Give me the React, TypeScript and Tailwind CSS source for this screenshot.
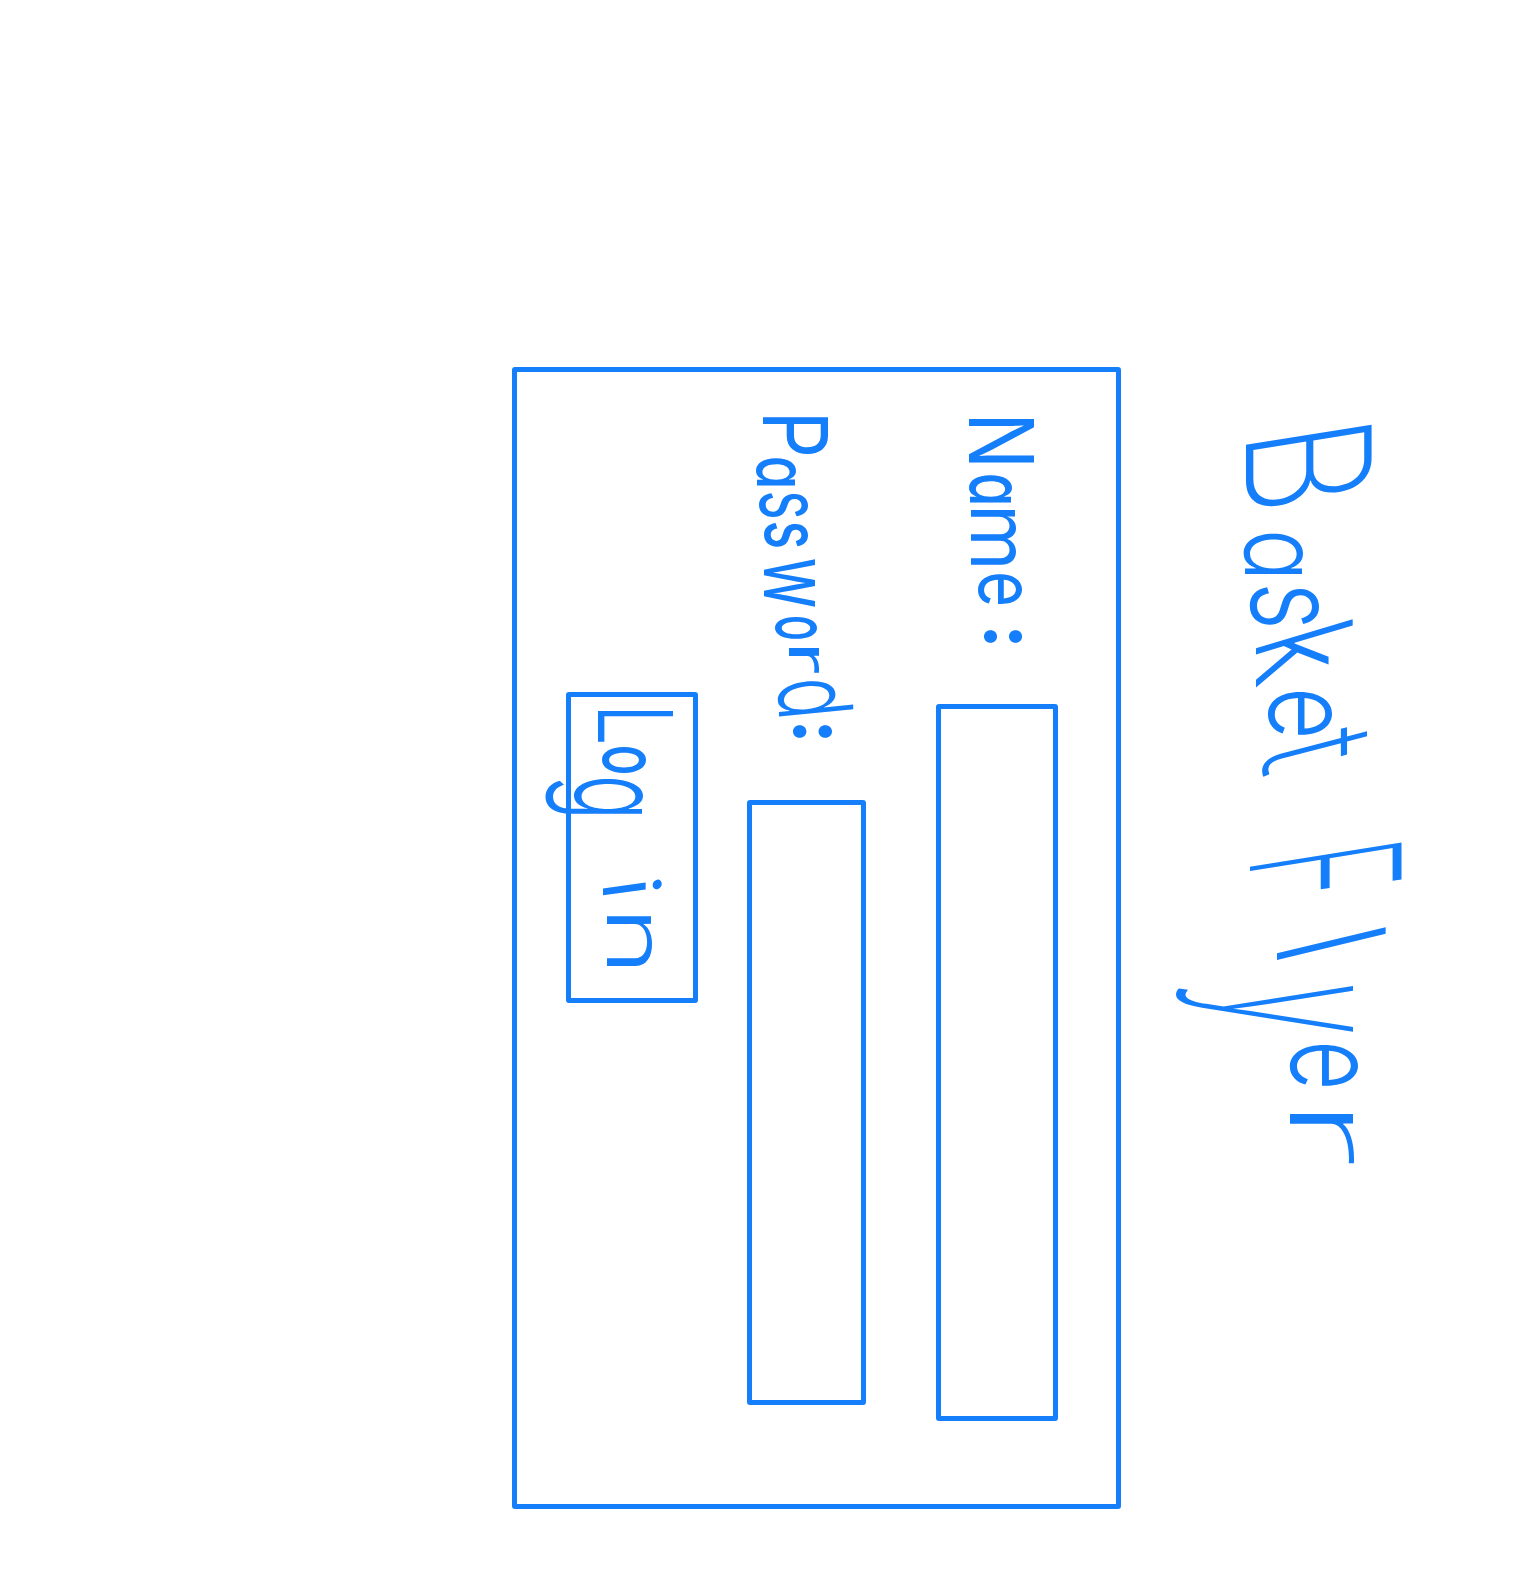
import { useMemo } from "react";

// char, ink left, ink right, ink top, ink bottom, back-slant (dx per dy)
type Glyph = [string, number, number, number, number, number?];

const TITLE_FIRST: Glyph[] = [
  ["B", 424, 511, 165, 291, 0.16],
  ["a", 533, 570, 233, 293],
  ["s", 587, 625, 218, 287],
  ["k", 619, 688, 184, 281, 0.3],
  ["e", 692, 735, 204, 268],
  ["t", 722, 778, 170, 277, 0.26],
];
const TITLE_SECOND: Glyph[] = [
  ["F", 842, 904, 134, 286, 0.16],
  ["l", 927, 960, 150, 259, 0.24],
  ["y", 986, 1032, 184, 361],
  ["e", 1045, 1086, 178, 246],
  ["r", 1114, 1164, 183, 247],
];
const NAME: Glyph[] = [
  ["N", 419, 463, 502, 567],
  ["a", 475, 500, 524, 567],
  ["m", 510, 565, 520, 565],
  ["e", 574, 604, 515, 559],
  [":", 630, 643, 515, 553],
];
const PASSWORD: Glyph[] = [
  ["P", 417, 454, 708, 773],
  ["a", 458, 483, 741, 781],
  ["s", 493, 517, 729, 778],
  ["s", 523, 547, 729, 773],
  ["w", 559, 607, 722, 773],
  ["o", 617, 639, 719, 761],
  ["r", 648, 673, 718, 748],
  ["d", 677, 717, 683, 759, 0.1],
  [":", 725, 738, 704, 743],
];
const LOG: Glyph[] = [
  ["L", 711, 742, 864, 939],
  ["o", 747, 773, 891, 935],
  ["g", 779, 814, 893, 991],
];
const IN: Glyph[] = [
  ["i", 879, 897, 875, 934, 0.14],
  ["n", 916, 966, 884, 929],
];

const PEN = 6.8;
const WEIGHTS = [100, 200, 300, 400, 500, 600, 700, 800];

// Fits one glyph's ink to its box in the given weight and reports its stroke width.
function fit(ctx: CanvasRenderingContext2D, glyph: Glyph, weight: number) {
  const [char, left, right, top, bottom, slant = 0] = glyph;
  const height = bottom - top;
  ctx.font = `${weight} 200px Inter, sans-serif`;
  const stem = ctx.measureText("l");
  const m = ctx.measureText(char);
  const k = height / (m.actualBoundingBoxAscent + m.actualBoundingBoxDescent);
  const size = k * 200;
  const baseline = size / 2 + ((m.fontBoundingBoxAscent - m.fontBoundingBoxDescent) * k) / 2;
  const inkTop = baseline - m.actualBoundingBoxAscent * k;
  const inkLeft = -m.actualBoundingBoxLeft * k;
  const inkWidth = (m.actualBoundingBoxLeft + m.actualBoundingBoxRight) * k;
  const scale = (right - left - slant * height) / inkWidth;
  const stroke = (stem.actualBoundingBoxLeft + stem.actualBoundingBoxRight) * k;
  return {
    miss: char === ":" ? 800 - weight : Math.abs(stroke * (0.5 * scale + 0.5) - PEN),
    style: {
      fontWeight: weight,
      fontSize: size,
      transform: `matrix(${scale},0,${slant},1,${-scale * inkLeft - slant * inkTop},${-inkTop})`,
    },
  };
}

function Word({ glyphs, x, y }: { glyphs: Glyph[]; x: number; y: number }) {
  const fitted = useMemo(() => {
    const ctx = document.createElement("canvas").getContext("2d")!;
    return glyphs.map((glyph, i) => {
      const [char, left, right, top, bottom] = glyph;
      const best = WEIGHTS.map((w) => fit(ctx, glyph, w)).reduce((a, b) => (b.miss < a.miss ? b : a));
      return {
        char,
        ink: best.style,
        cell: {
          marginLeft: left - (i === 0 ? x : glyphs[i - 1][2]),
          marginTop: top - y,
          width: right - left,
          height: bottom - top,
        },
      };
    });
  }, [glyphs, x, y]);

  return (
    <span className="flex h-0 w-0 items-start whitespace-pre">
      {fitted.map((g, i) => (
        <span key={i} className="block shrink-0" style={g.cell}>
          <span className="block w-0 origin-top-left leading-none" style={g.ink}>
            {g.char}
          </span>
        </span>
      ))}
    </span>
  );
}

export default function App() {
  return (
    <div className="h-[1574px] w-[1536px] overflow-hidden bg-white">
      <main className="flex h-[1536px] w-[1574px] origin-top-left translate-x-[1536px] rotate-90 flex-col pt-[134px] pl-[367px] font-['Inter',sans-serif] text-[#157efb] [font-feature-settings:'cv11']">
        <h1 className="flex h-[281px] shrink-0">
          <Word glyphs={TITLE_FIRST} x={367} y={134} />{" "}
          <Word glyphs={TITLE_SECOND} x={367} y={134} />
        </h1>
        <form className="flex h-[609px] w-[1142px] shrink-0 flex-col rounded-[3px] border-5 border-[#157efb] pt-[58px]">
          <label className="flex h-[122px] shrink-0">
            <Word glyphs={NAME} x={372} y={478} />
            <span className="ml-[332px] h-[122px] w-[717px] rounded-[3px] border-5 border-[#157efb]" />
          </label>
          <label className="mt-[70px] flex h-[119px] shrink-0">
            <Word glyphs={PASSWORD} x={372} y={670} />
            <span className="ml-[428px] h-[119px] w-[605px] rounded-[3px] border-5 border-[#157efb]" />
          </label>
          <button
            type="button"
            className="mt-[49px] ml-[320px] flex h-[132px] w-[311px] shrink-0 items-start rounded-[3px] border-5 border-[#157efb] text-left"
          >
            <Word glyphs={LOG} x={697} y={843} />{" "}
            <Word glyphs={IN} x={697} y={843} />
          </button>
        </form>
      </main>
    </div>
  );
}
